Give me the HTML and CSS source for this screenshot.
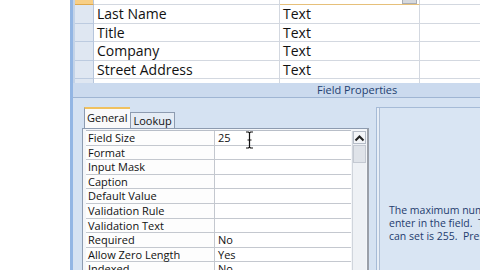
FILE: index.html
```html
<!DOCTYPE html>
<html>
<head>
<meta charset="utf-8">
<link rel="stylesheet" href="styles.css">
</head>
<body>
<div class="screen">
  <div class="blank"></div>
  <div class="app">
    <div class="design">
      <div class="grid">
        <div class="row sel">
          <div class="c sel-cell"></div>
          <div class="c name"></div>
          <div class="c type active"><span class="dd"></span></div>
          <div class="c desc"></div>
        </div>
        <div class="row">
          <div class="c sel-cell"></div>
          <div class="c name">Last Name</div>
          <div class="c type">Text</div>
          <div class="c desc"></div>
        </div>
        <div class="row">
          <div class="c sel-cell"></div>
          <div class="c name">Title</div>
          <div class="c type">Text</div>
          <div class="c desc"></div>
        </div>
        <div class="row">
          <div class="c sel-cell"></div>
          <div class="c name">Company</div>
          <div class="c type">Text</div>
          <div class="c desc"></div>
        </div>
        <div class="row">
          <div class="c sel-cell"></div>
          <div class="c name">Street Address</div>
          <div class="c type">Text</div>
          <div class="c desc"></div>
        </div>
        <div class="row">
          <div class="c sel-cell"></div>
          <div class="c name">City</div>
          <div class="c type">Text</div>
          <div class="c desc"></div>
        </div>
      </div>
    </div>
    <div class="band"><span class="band-title">Field Properties</span></div>
    <div class="lower">
      <div class="props">
        <div class="tabs">
          <div class="tab current">General</div>
          <div class="tab">Lookup</div>
        </div>
        <div class="page">
          <div class="table">
            <div class="prow"><span class="lbl">Field Size</span><span class="val">25</span></div>
            <div class="prow"><span class="lbl">Format</span><span class="val"></span></div>
            <div class="prow"><span class="lbl">Input Mask</span><span class="val"></span></div>
            <div class="prow"><span class="lbl">Caption</span><span class="val"></span></div>
            <div class="prow"><span class="lbl">Default Value</span><span class="val"></span></div>
            <div class="prow"><span class="lbl">Validation Rule</span><span class="val"></span></div>
            <div class="prow"><span class="lbl">Validation Text</span><span class="val"></span></div>
            <div class="prow"><span class="lbl">Required</span><span class="val">No</span></div>
            <div class="prow"><span class="lbl">Allow Zero Length</span><span class="val">Yes</span></div>
            <div class="prow"><span class="lbl">Indexed</span><span class="val">No</span></div>
          </div>
          <div class="scroll">
            <div class="sbtn">
              <svg width="11" height="8" viewBox="0 0 11 8"><path d="M1.5 6.5 L5.5 2.5 L9.5 6.5" fill="none" stroke="#222" stroke-width="2"/></svg>
            </div>
            <div class="thumb"></div>
          </div>
          <svg class="ibeam" width="9" height="18" viewBox="0 0 9 18"><path d="M1 1 H3.5 L4.5 2 L5.5 1 H8 M4.5 2 V16 M1 17 H3.5 L4.5 16 L5.5 17 H8 M2.5 9 H6.5" fill="none" stroke="#111" stroke-width="1.2"/></svg>
        </div>
      </div>
      <div class="help">
        <p>The maximum number of characters you can<br>enter in the field.&nbsp; The largest maximum you<br>can set is 255.&nbsp; Press F1 for help on field size.</p>
      </div>
    </div>
  </div>
</div>
</body>
</html>
```

FILE: styles.css
```css
* { box-sizing: border-box; }
html, body { margin: 0; padding: 0; }
body { width: 480px; height: 270px; overflow: hidden; background: #fff; }

.screen {
  display: flex;
  width: 480px;
  height: 270px;
  overflow: hidden;
}
.blank { width: 70px; flex: none; background: #fff; }

.app {
  flex: 1;
  display: flex;
  flex-direction: column;
  border-left: 3px solid #93b6e4;
  background: #d5e2f2;
  min-width: 0;
}

.design {
  height: 83px;
  flex: none;
  overflow: hidden;
  border-left: 2px solid #c3d3e8;
  background: #fff;
}
.grid { margin-top: -13.5px; }
.row {
  display: grid;
  grid-template-columns: 19px 186px 140px 1fr;
  height: 18.5px;
  font-family: "Open Sans", "Noto Sans", sans-serif;
  font-size: 14px;
  color: #111;
}
.c {
  border-bottom: 1px solid #d3d8e0;
  border-right: 1px solid #d3d8e0;
  display: flex;
  align-items: center;
  padding-left: 3px;
  white-space: nowrap;
  overflow: hidden;
}
.sel-cell { background: #dfe7f2; border-bottom-color: #bccbe0; border-right-color: #b7c6dc; }
.sel .sel-cell { background: #f8cf86; border-bottom-color: #e0a94d; }
.type.active { border-bottom: 1px solid #e6c07a; position: relative; }
.dd {
  position: absolute;
  right: 2px;
  bottom: 0;
  width: 15px;
  height: 6px;
  background: #d6d9de;
  border: 1px solid #a9adb5;
}
.desc { border-right: none; }

.band {
  height: 15px;
  flex: none;
  background: #cbdaee;
  border-bottom: 1px solid #9fb5d3;
  font-family: "Open Sans", "Noto Sans", sans-serif;
  font-size: 11px;
  line-height: 14px;
  color: #233f70;
  padding-left: 244px;
  white-space: nowrap;
  overflow: hidden;
}

.lower {
  flex: 1;
  display: flex;
  align-items: flex-start;
  padding-top: 9px;
  background: #d5e2f2;
}
.props {
  margin-left: 9px;
  width: 287px;
  flex: none;
}
.tabs {
  display: flex;
  align-items: flex-end;
  height: 21px;
  padding-left: 2px;
  font-family: "Open Sans", "Noto Sans", sans-serif;
  font-size: 11px;
  color: #111;
}
.tab {
  height: 16px;
  padding: 0 2px;
  line-height: 15px;
  border: 1px solid #8d9bb0;
  border-bottom: none;
  background: #e5ecf5;
}
.tab.current {
  height: 21px;
  line-height: 18px;
  background: #fafafa;
  border-top: 2px solid #f0c15f;
  border-right: none;
  padding: 0 3px 0 2px;
}
.page {
  position: relative;
  display: flex;
  align-items: flex-start;
  border: 1px solid #8d9bb0;
  border-right: 2px solid #9a9fa8;
  background: #f4f6f9;
  padding: 1px 1px 0 3px;
  height: 160px;
}
.table {
  width: 265px;
  flex: none;
  font-family: "Open Sans", "Noto Sans", sans-serif;
  font-size: 11px;
  color: #111;
  background: #fff;
  border-top: 1px solid #b8bec8;
}
.prow {
  display: grid;
  grid-template-columns: 129px 1fr;
  height: 14.6px;
  border-bottom: 1px solid #c4c8cf;
  line-height: 13px;
}
.lbl { padding-left: 2px; border-right: 1px solid #c4c8cf; white-space: nowrap; background: #fdfdfd; }
.val { padding-left: 3px; background: #fff; }

.scroll {
  margin-left: 1px;
  margin-top: 1px;
  width: 16px;
  height: 160px;
  background: #eef1f5;
  border-left: 1px solid #d0d5dc;
}
.sbtn {
  height: 13px;
  border: 1px solid #b5bcc7;
  background: #f3f5f8;
  display: flex;
  justify-content: center;
  align-items: center;
}
.thumb {
  margin-top: 1px;
  height: 18px;
  border: 1px solid #c4c9d2;
  background: #dfe3e9;
}
.ibeam { position: absolute; left: 162px; top: 2px; }

.help {
  margin-left: 7px;
  flex: 1;
  height: 170px;
  border-left: 1px solid #a6bbd7;
  border-top: 1px solid #a6bbd7;
  box-shadow: inset 2px 0 0 #e7eef7, inset 3px 0 0 #aebfd6;
  background: #d9e5f3;
  padding: 96px 0 0 12px;
  overflow: hidden;
}
.help p {
  margin: 0;
  white-space: nowrap;
  font-family: "Open Sans", "Noto Sans", sans-serif;
  font-size: 10.5px;
  line-height: 13px;
  color: #1f3c6e;
}
```
